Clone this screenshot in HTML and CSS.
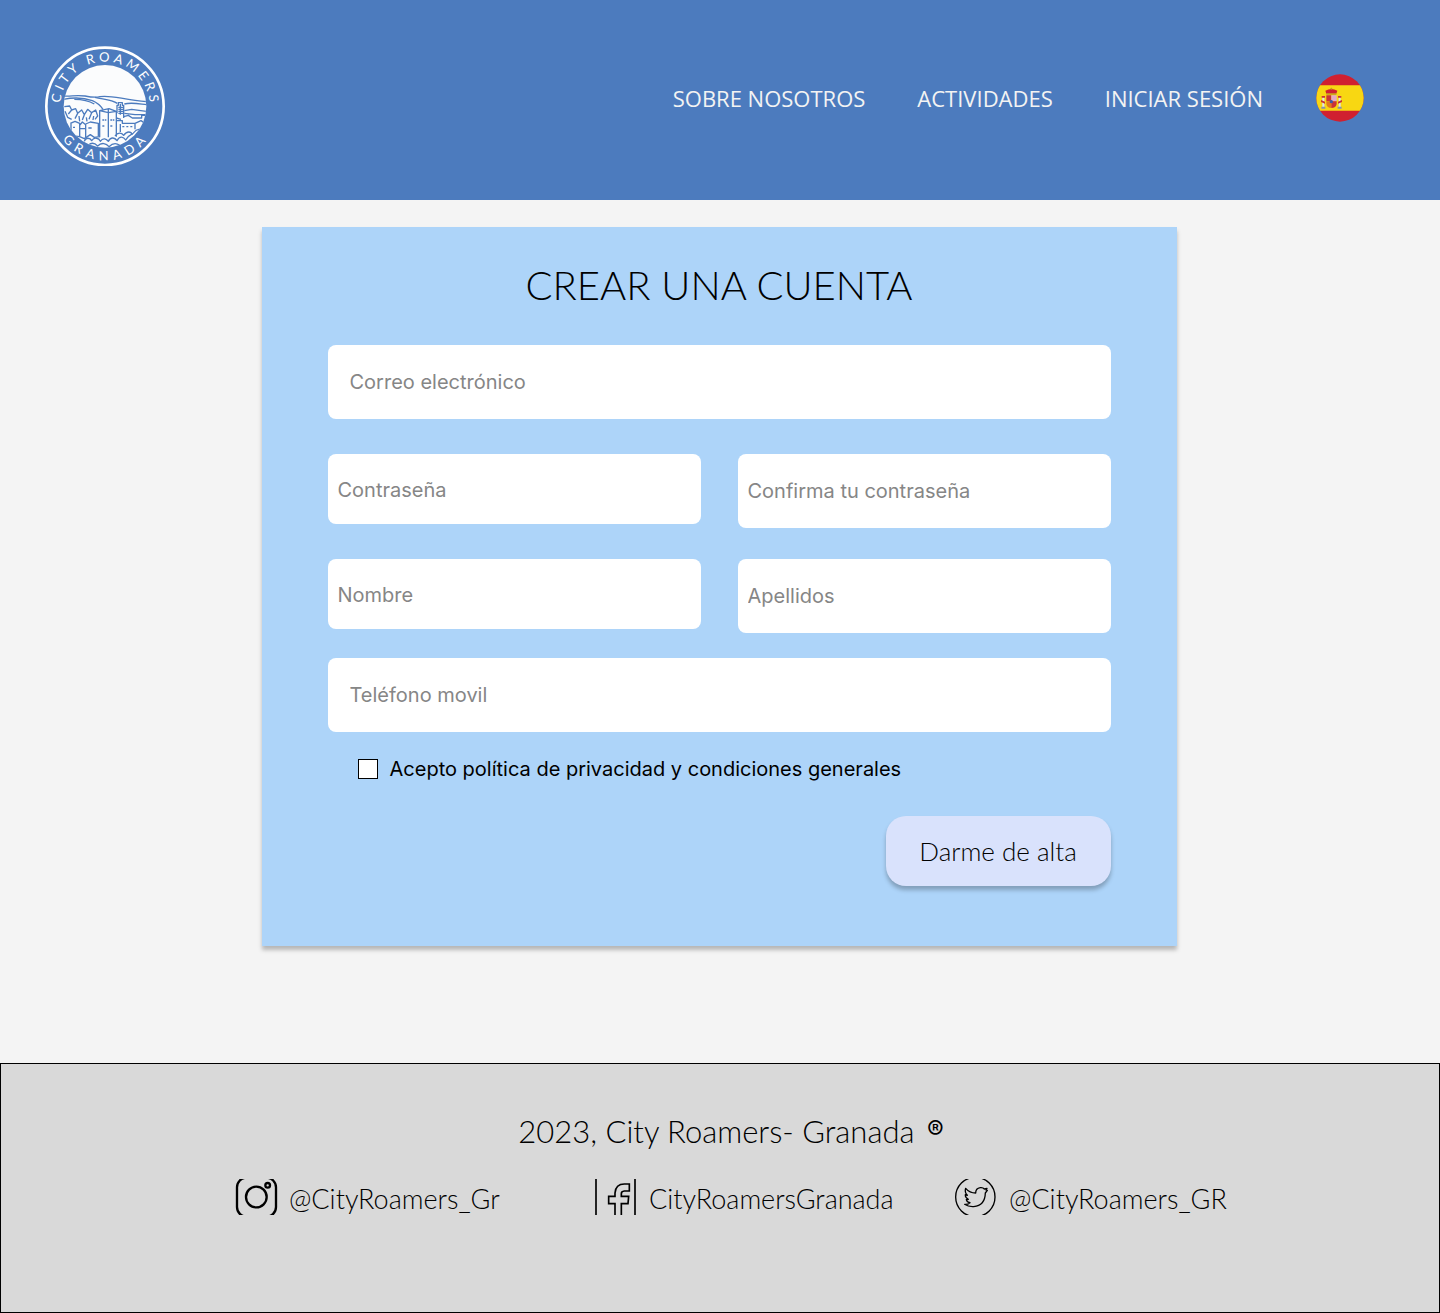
FILE: index.html
```html
<!DOCTYPE html>
<html lang="es">
<head>
<meta charset="utf-8">
<meta name="viewport" content="width=device-width, initial-scale=1">
<title>City Roamers Granada - Crear una cuenta</title>
<link rel="stylesheet" href="styles.css">
</head>
<body>
<header class="site-header">
  <a class="logo" href="#" aria-label="City Roamers Granada">
    <svg class="logo-art" viewBox="30 30 360 360" aria-hidden="true">
      <defs>
        <path id="arc-top" d="M76 211a134 134 0 0 1 268 0"/>
        <path id="arc-bottom" d="M48 211a162 162 0 0 0 324 0"/>
        <clipPath id="disc"><circle cx="210" cy="211" r="124"/></clipPath>
      </defs>
      <circle cx="210" cy="211" r="176" fill="none" stroke="#fff" stroke-width="8"/>
      <circle cx="210" cy="211" r="124" fill="#fbfcfd"/>
      <g class="logo-lines" clip-path="url(#disc)">
        <path d="M85 180C110 182 120 176 150 180C170 184 180 186 195 182C225 176 260 190 335 197"/>
        <path d="M85 190C115 184 150 186 172 194C186 200 196 208 204 220"/>
        <path d="M118 190C145 190 165 196 178 204"/>
        <path d="M180 184C205 190 230 190 247 202M268 204C290 198 315 204 335 206"/>
        <path d="M88 212L104 210L110 222L100 234M110 222L122 218L128 232L120 248M128 232L140 222L148 236L142 252M148 236L158 220L170 230L162 250M170 230L182 222L188 240L180 250"/>
        <path d="M90 226L98 244L110 250M132 240L134 256M154 244L156 256M176 240L174 252"/>
        <path d="M194 304V224L222 218L244 226V302M220 220V304M194 224L220 230L244 226"/>
        <path d="M246 232V208H250V200H262V208H266V246M250 214H264M250 220H264M250 226H264M250 232H264M256 204V236"/>
        <path d="M268 224L290 220L334 226M268 232L300 236H334M266 242L280 238L292 246H320V238H334"/>
        <path d="M244 254H262V262H300L318 254L330 262M256 264V288M300 262V280M244 246L258 250"/>
        <path d="M106 262L120 256L134 262V300M108 262V290M134 268L142 258L152 266V304M152 264L166 258L190 262V300M134 278H152"/>
        <path d="M104 282L116 300L134 302L148 308L166 296L178 304L194 302"/>
        <path d="M148 316C152 302 166 306 170 314C178 302 192 306 196 316C204 304 214 308 220 316C228 300 240 306 246 314C254 298 266 302 272 312C280 294 292 298 298 288C306 276 316 284 324 274"/>
        <path d="M160 328C170 318 180 322 188 330C200 318 214 322 222 332C236 318 246 322 254 328M240 300C248 288 260 290 266 298C276 284 288 286 292 296"/>
        <path d="M202 252H208M210 252H214M202 270H208M226 252H232M234 252H238M226 270H232M262 272H268M274 272H280M286 272H292M160 276H170M114 274H120"/>
      </g>
      <g class="logo-text">
        <text><textPath href="#arc-top" startOffset="51%">CITY ROAMERS</textPath></text>
        <text class="logo-town"><textPath href="#arc-bottom" startOffset="51%">GRANADA</textPath></text>
      </g>
    </svg>
  </a>
  <nav class="main-nav">
    <a href="#">SOBRE NOSOTROS</a>
    <a href="#">ACTIVIDADES</a>
    <a href="#">INICIAR SESIÓN</a>
    <button class="language" type="button" aria-label="Español">
      <svg class="flag" viewBox="0 0 144 144" aria-hidden="true">
        <defs><clipPath id="round"><circle cx="72" cy="72" r="71"/></clipPath></defs>
        <g clip-path="url(#round)">
          <path fill="#d02030" d="M0 0h144v144H0z"/>
          <path fill="#f8d712" d="M0 34h144v76H0z"/>
          <path fill="#d02030" d="M28 50q18-10 36 0l-3 9H31z"/>
          <circle cx="46" cy="44" r="3" fill="#c39a20"/>
          <path fill="#c39a20" d="M31 58h30v4H31z"/>
          <path fill="#c93338" d="M31 64h15v18H31z"/>
          <path fill="#e5aac8" d="M46 64h16v18H46z"/>
          <path fill="#e0781c" d="M31 82h15v20q-13 0-15-12z"/>
          <path fill="#c93338" d="M46 82h16v8q-2 12-16 12z"/>
          <circle cx="46" cy="83" r="5" fill="#3b5aa8"/>
          <path fill="#dfe3ea" d="M19 70h6v32h-6zM68 70h6v32h-6z"/>
          <path fill="#c93338" d="M15 78l12 5v6l-12-5zM78 78l-12 5v6l12-5zM17 66h10v5H17zM66 66h10v5H66z"/>
          <path fill="#8a93a8" d="M16 98h12v6H16zM65 98h12v6H65z"/>
        </g>
      </svg>
    </button>
  </nav>
</header>

<main class="content">
  <form class="card">
    <h1 class="card-title">CREAR UNA CUENTA</h1>
    <input class="field field-wide" type="email" placeholder="Correo electrónico" aria-label="Correo electrónico">
    <div class="pair">
      <input class="field field-short" type="password" placeholder="Contraseña" aria-label="Contraseña">
      <input class="field" type="password" placeholder="Confirma tu contraseña" aria-label="Confirma tu contraseña">
    </div>
    <div class="pair">
      <input class="field field-short" type="text" placeholder="Nombre" aria-label="Nombre">
      <input class="field" type="text" placeholder="Apellidos" aria-label="Apellidos">
    </div>
    <input class="field field-wide" type="tel" placeholder="Teléfono movil" aria-label="Teléfono movil">
    <div class="terms">
      <input class="tick" type="checkbox" id="terms">
      <label for="terms">Acepto política de privacidad y condiciones generales</label>
    </div>
    <button class="submit" type="submit">Darme de alta</button>
  </form>
</main>

<footer class="site-footer">
  <p class="copyright">2023, City Roamers- Granada <span class="mark">®</span></p>
  <ul class="social">
    <li><a href="#">
      <svg class="social-icon" viewBox="0 0 129 108" aria-hidden="true">
        <rect x="6" y="-4" width="117" height="117" rx="29" stroke-width="7"/>
        <circle cx="64" cy="54" r="31" stroke-width="7"/>
        <circle cx="98" cy="19" r="7" stroke-width="7"/>
      </svg>@CityRoamers_Gr</a></li>
    <li><a href="#">
      <svg class="social-icon" viewBox="0 0 129 108" aria-hidden="true">
        <path stroke-width="5" d="M3 0V108M120 0V108"/>
        <path stroke-width="5" d="M60 108V74H41V52H60V42Q62 15 88 15H103V36H88Q79 37 79 44V52H101L99 74H79V108"/>
      </svg>CityRoamersGranada</a></li>
    <li><a href="#">
      <svg class="social-icon" viewBox="0 0 129 108" aria-hidden="true">
        <circle cx="61" cy="54" r="59" stroke-width="4"/>
        <path stroke-width="4" stroke-linejoin="round" d="M32 28Q44 42 62 42Q62 28 76 26Q84 25 88 30L96 28L93 33L97 34L91 42Q90 80 56 83Q40 84 29 76Q38 77 45 71Q36 70 34 62L40 61Q30 56 31 47L37 49Q28 40 32 28Z"/>
      </svg>@CityRoamers_GR</a></li>
  </ul>
</footer>
</body>
</html>
```

FILE: styles.css
```css
* {
  box-sizing: border-box;
}

body {
  display: flex;
  flex-direction: column;
  min-height: 100vh;
  margin: 0;
  background: #f4f4f4;
  color: #000;
  font-family: Inter, "Liberation Sans", sans-serif;
  font-size: 20px;
}

a {
  color: inherit;
  text-decoration: none;
}

/* Header */

.site-header {
  display: flex;
  align-items: flex-start;
  justify-content: space-between;
  padding: 46px 75px 34px 45px;
  background: #4c7bbe;
}

.logo,
.logo-art {
  display: block;
  width: 120px;
  height: 120px;
}

.logo-lines {
  fill: none;
  stroke: #4c7bbe;
  stroke-width: 4;
  stroke-linejoin: round;
}

.logo-text {
  fill: #fff;
  font-family: Lato, sans-serif;
  font-size: 39px;
  font-weight: 400;
  letter-spacing: 11px;
  text-anchor: middle;
}

.logo-town {
  letter-spacing: 16px;
}

.main-nav {
  display: flex;
  align-items: center;
  gap: 52px;
  padding-top: 28px;
  color: #f3f3f3;
  font-family: "Open Sans", sans-serif;
  font-size: 22px;
  font-weight: 400;
  line-height: 28px;
}

.language {
  padding: 0;
  border: 0;
  background: none;
  cursor: pointer;
}

.flag {
  display: block;
  width: 50px;
  height: 48px;
}

/* Registration form */

.content {
  flex: 1;
  padding: 27px 26px 117px 24px;
}

.card {
  display: flex;
  flex-direction: column;
  max-width: 915px;
  margin: 0 auto;
  padding: 34px 66px 60px;
  background: #add4f9;
  box-shadow: 0 4px 4px rgba(0, 0, 0, 0.25);
}

.card-title {
  margin: 0 0 36px;
  font-family: Lato, sans-serif;
  font-size: 40px;
  font-weight: 300;
  line-height: 48px;
  text-align: center;
}

.field {
  width: 100%;
  height: 74px;
  padding: 0 10px;
  border: 0;
  border-radius: 8px;
  background: #fff;
  color: #000;
  font: inherit;
}

.field::placeholder {
  color: #868686;
  opacity: 1;
}

.field-wide {
  padding: 0 22px;
}

.field-short {
  height: 70px;
  padding-top: 2px;
}

.pair {
  display: grid;
  grid-template-columns: 1fr 1fr;
  gap: 37px;
  margin-top: 35px;
}

.pair + .pair {
  margin-top: 31px;
}

.pair + .field {
  margin-top: 25px;
}

.terms {
  display: flex;
  align-items: center;
  gap: 12px;
  margin: 25px 0 0 30px;
  line-height: 24px;
}

.tick {
  appearance: none;
  width: 20px;
  height: 20px;
  margin: 0;
  border: 1px solid #000;
  background: #fff;
}

.tick:checked {
  background: #4c7bbe;
}

.submit {
  align-self: flex-end;
  width: 225px;
  height: 70px;
  margin-top: 35px;
  padding: 0;
  border: 0;
  border-radius: 20px;
  background: #d9e2fc;
  box-shadow: 0 4px 4px rgba(0, 0, 0, 0.25);
  color: #000;
  font-family: Lato, sans-serif;
  font-size: 26px;
  font-weight: 300;
  cursor: pointer;
}

/* Footer */

.site-footer {
  min-height: 250px;
  padding: 47px 0 48px 22px;
  border: 1px solid #000;
  background: #d9d9d9;
  font-family: Lato, sans-serif;
  font-weight: 300;
}

.copyright {
  margin: 0;
  font-size: 31px;
  line-height: 40px;
  text-align: center;
}

.mark {
  margin-left: 4px;
  font-family: Inter, sans-serif;
  font-size: 25px;
  font-weight: 400;
  line-height: 1;
  vertical-align: 4px;
}

.social {
  display: grid;
  grid-template-columns: 360px 360px 272px;
  justify-content: center;
  margin: 28px 0 0;
  padding: 0;
  list-style: none;
  font-size: 27px;
  line-height: 40px;
}

.social a {
  display: flex;
  align-items: flex-start;
  gap: 11px;
}

.social-icon {
  flex: none;
  width: 43px;
  height: 36px;
  fill: none;
  stroke: #000;
}
```
